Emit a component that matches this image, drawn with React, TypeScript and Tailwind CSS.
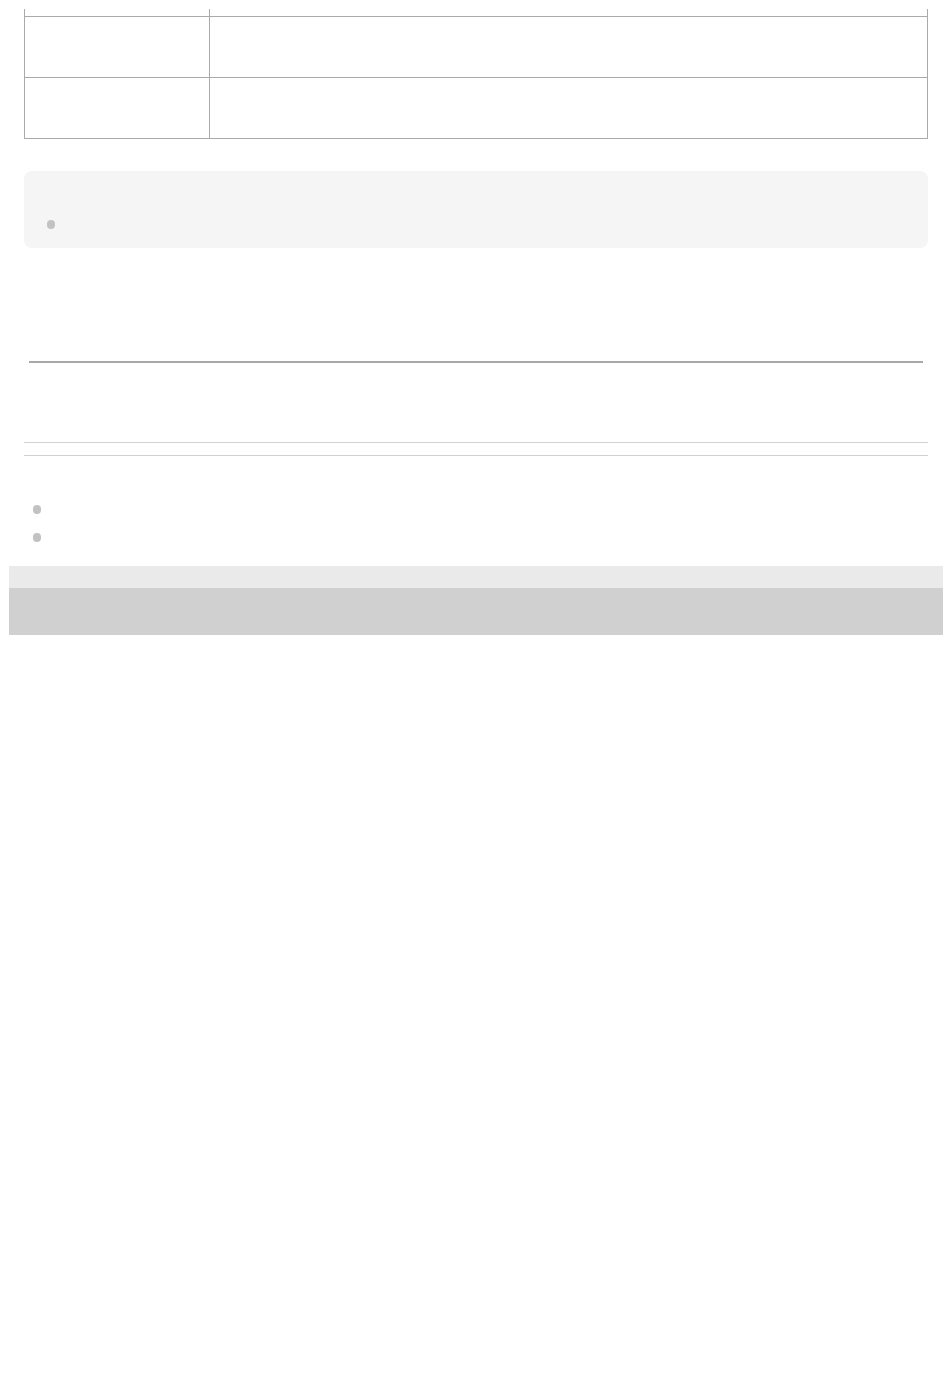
export default function App() {
  const rows = [0, 1];

  return (
    <div className="min-h-[1379px] bg-white pl-[9px] pr-[7px] font-['Liberation_Sans',Arial,sans-serif]">
      <div className="px-[15px] pt-[9px]">
        {/* spec table */}
        <table className="w-full border-collapse">
          <tbody>
            <tr className="h-[7px]">
              <td className="w-[185px] border-l border-r border-[#aaaaaa] p-0" />
              <td className="border-r border-[#aaaaaa] p-0" />
            </tr>
            {rows.map((r) => (
              <tr key={r} className="h-[61px]">
                <td className="border border-[#aaaaaa] p-0" />
                <td className="border border-[#aaaaaa] p-0" />
              </tr>
            ))}
          </tbody>
        </table>

        {/* note box */}
        <div className="mt-[32px] h-[77px] rounded-lg bg-[#f5f5f5] px-[23px] pt-[49px]">
          <div className="h-[9px] w-[8px] rounded-full bg-[#c2c2c2]" />
        </div>

        <div className="mx-[5px] mt-[113px] h-[2px] bg-[#a8a8a8]" />

        <div className="mt-[79px] border-t border-[#d2d2d2]" />
        <div className="mt-[12px] border-t border-[#d2d2d2]" />

        <ul className="mt-[49px] flex flex-col gap-[19px] pl-[9px]">
          <li className="h-[9px] w-[8px] rounded-full bg-[#c2c2c2]" />
          <li className="h-[9px] w-[8px] rounded-full bg-[#c2c2c2]" />
        </ul>
      </div>

      {/* footer band */}
      <div className="mt-[24px]">
        <div className="h-[22px] bg-[#eaeaea]" />
        <div className="h-[47px] bg-[#d0d0d0]" />
      </div>
    </div>
  );
}
